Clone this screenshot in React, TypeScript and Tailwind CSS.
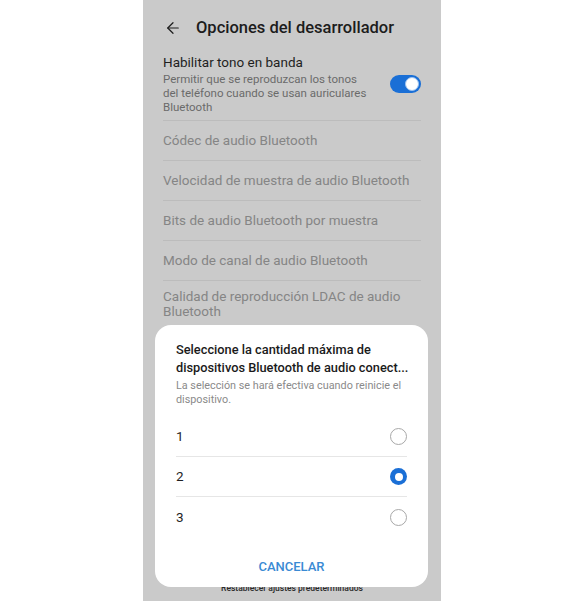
import { ArrowLeft } from "lucide-react";

const items = [
  "Códec de audio Bluetooth",
  "Velocidad de muestra de audio Bluetooth",
  "Bits de audio Bluetooth por muestra",
  "Modo de canal de audio Bluetooth",
];

function Radio({ checked }: { checked?: boolean }) {
  if (checked) {
    return (
      <span className="flex h-[17px] w-[17px] items-center justify-center rounded-full bg-[#1a6fd6]">
        <span className="h-[8px] w-[8px] rounded-full bg-white" />
      </span>
    );
  }
  return <span className="h-[17px] w-[17px] rounded-full border border-[#a8a8a8]" />;
}

export default function App() {
  return (
    <div className="flex h-[601px] w-full bg-white font-['Roboto',sans-serif]">
      <div className="relative ml-[143px] h-full w-[298px] overflow-hidden bg-[#cacaca]">
        {/* Header */}
        <div className="flex h-[53px] items-center pl-[21px] pt-[3px]">
          <ArrowLeft className="h-[18px] w-[18px] text-[#1c1c1c]" strokeWidth={1.6} />
          <span className="ml-[14px] text-[16.5px] font-medium text-[#1c1c1c]">
            Opciones del desarrollador
          </span>
        </div>

        <div className="px-[20px]">
          {/* In-band ringing */}
          <div className="flex items-center border-b border-[#bcbcbc] pb-[6px]">
            <div className="flex-1">
              <div className="text-[13.5px] leading-[18px] text-[#1f1f1f]">Habilitar tono en banda</div>
              <div className="mt-[1px] text-[11.5px] leading-[14px] text-[#6a6a6a]">
                Permitir que se reproduzcan los tonos
                <br />
                del teléfono cuando se usan auriculares
                <br />
                Bluetooth
              </div>
            </div>
            <div className="flex h-[18px] w-[31px] items-center justify-end rounded-full bg-[#1a6fd6] pr-[2px]">
              <span className="h-[14px] w-[14px] rounded-full border border-[#9cc2ef] bg-white" />
            </div>
          </div>

          {items.map((t) => (
            <div
              key={t}
              className="flex h-[40px] items-center border-b border-[#bcbcbc] text-[13.5px] text-[#858585]"
            >
              {t}
            </div>
          ))}
          <div className="pt-[8px] text-[13.5px] leading-[15px] text-[#858585]">
            Calidad de reproducción LDAC de audio Bluetooth
          </div>
        </div>

        <div className="absolute bottom-[6px] left-0 right-0 text-center text-[8.5px] font-medium text-[#2a2a2a]">
          Restablecer ajustes predeterminados
        </div>

        {/* Dialog */}
        <div className="absolute left-[12px] top-[325px] h-[262px] w-[273px] rounded-[16px] bg-white px-[21px] pt-[16px]">
          <div className="whitespace-nowrap text-[12.8px] font-medium leading-[18px] text-[#1a1a1a]">
            Seleccione la cantidad máxima de
            <br />
            dispositivos Bluetooth de audio conect...
          </div>
          <div className="mt-[2px] text-[10.8px] leading-[14px] text-[#8a8a8a]">
            La selección se hará efectiva cuando reinicie el dispositivo.
          </div>
          <div className="mt-[10px]">
            {["1", "2", "3"].map((n, i) => (
              <div
                key={n}
                className={`flex h-[40px] items-center justify-between text-[13.5px] text-[#1f1f1f] ${
                  i < 2 ? "border-b border-[#e6e6e6]" : ""
                }`}
              >
                <span>{n}</span>
                <Radio checked={n === "2"} />
              </div>
            ))}
          </div>
          <div className="mt-[20px] text-center text-[13px] font-medium text-[#3a8ad4]">CANCELAR</div>
        </div>
      </div>
    </div>
  );
}
